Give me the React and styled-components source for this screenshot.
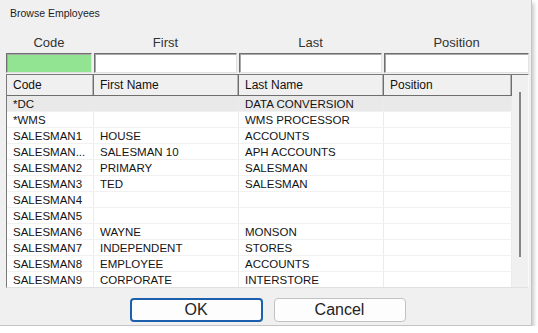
import React from "react";
import styled, { createGlobalStyle } from "styled-components";

const Global = createGlobalStyle`
  html, body { margin: 0; padding: 0; background: #ffffff; }
  body { font-family: "Liberation Sans", Arial, sans-serif; }
  * { box-sizing: border-box; }
`;

const Dialog = styled.div`
  width: 532px;
  height: 326px;
  background: #f0f0f0;
  border-right: 1px solid #c4c4c4;
  border-bottom: 1px solid #c4c4c4;
  box-shadow: 2px 3px 4px rgba(0, 0, 0, 0.22);
  display: flex;
  flex-direction: column;
  padding: 0 2px 0 6px;
`;

const Title = styled.div`
  font-size: 10.5px;
  line-height: 14px;
  height: 20px;
  padding: 6px 0 0 4px;
  color: #1e1e1e;
`;

const FilterGrid = styled.div`
  display: grid;
  grid-template-columns: 86px 143px 143px 145px;
  column-gap: 2px;
  margin-top: ${(p) => p.$top}px;
`;

const FilterLabel = styled.div`
  font-size: 13px;
  line-height: 17px;
  height: 17px;
  text-align: center;
  color: #333;
`;

const FilterInput = styled.div`
  height: 20px;
  background: ${(p) => (p.$active ? "#92e492" : "#ffffff")};
  border: 1px solid;
  border-color: #6f6f6f #e2e2e2 #e2e2e2 #6f6f6f;
  box-shadow: inset 1px 1px 0 #a8a8a8;
`;

const Table = styled.div`
  margin-top: 1px;
  height: 214px;
  display: flex;
  border-top: 1px solid #7a7a7a;
  border-left: 1px solid #7a7a7a;
  border-right: 1px solid #fafafa;
  border-bottom: 1px solid #e0e0e0;
  background: #fff;
  overflow: hidden;
`;

const Main = styled.div`
  width: 505px;
  display: flex;
  flex-direction: column;
`;

const cols = "87px 145px 145px 128px";

const HeaderRow = styled.div`
  display: grid;
  grid-template-columns: ${cols};
  height: 21px;
  flex: none;
  background: #f0f0f0;
  border-bottom: 1px solid #6e6e6e;
`;

const HeaderCell = styled.div`
  font-size: 12px;
  line-height: 20px;
  padding-left: 6px;
  color: #111;
  border-right: 1px solid #6e6e6e;
  box-shadow: inset -1px 0 0 #b5b5b5;
  white-space: nowrap;
  overflow: hidden;
`;

const Row = styled.div`
  display: grid;
  grid-template-columns: ${cols};
  height: 16px;
  flex: none;
  background: ${(p) => (p.$selected ? "#e9e9e9" : "#ffffff")};
  border-bottom: 1px solid #f1f1f1;
`;

const Cell = styled.div`
  font-size: 11.5px;
  line-height: 15px;
  padding: 1px 0 0 6px;
  color: #141414;
  border-right: 1px solid #ebebeb;
  white-space: nowrap;
  overflow: hidden;
`;

const Track = styled.div`
  width: 17px;
  background: #f0f0f0;
  padding: 17px 0 0 7px;
`;

const Thumb = styled.div`
  width: 2px;
  height: 165px;
  background: #858585;
`;

const ButtonRow = styled.div`
  margin-top: 10px;
  display: flex;
  justify-content: center;
  gap: 11px;
`;

const Button = styled.button`
  width: ${(p) => p.$w}px;
  height: 24px;
  background: #fdfdfd;
  border: ${(p) => (p.$primary ? "2px solid #1b5fad" : "1px solid #c2c2c2")};
  border-radius: 4px;
  font-family: "Liberation Sans", Arial, sans-serif;
  font-size: 16px;
  color: #222;
  padding: 0;
`;

const rows = [
  ["*DC", "", "DATA CONVERSION", ""],
  ["*WMS", "", "WMS PROCESSOR", ""],
  ["SALESMAN1", "HOUSE", "ACCOUNTS", ""],
  ["SALESMAN...", "SALESMAN 10", "APH ACCOUNTS", ""],
  ["SALESMAN2", "PRIMARY", "SALESMAN", ""],
  ["SALESMAN3", "TED", "SALESMAN", ""],
  ["SALESMAN4", "", "", ""],
  ["SALESMAN5", "", "", ""],
  ["SALESMAN6", "WAYNE", "MONSON", ""],
  ["SALESMAN7", "INDEPENDENT", "STORES", ""],
  ["SALESMAN8", "EMPLOYEE", "ACCOUNTS", ""],
  ["SALESMAN9", "CORPORATE", "INTERSTORE", ""],
];

export default function App() {
  return (
    <>
      <Global />
      <Dialog>
        <Title>Browse Employees</Title>
        <FilterGrid $top={14}>
          <FilterLabel>Code</FilterLabel>
          <FilterLabel>First</FilterLabel>
          <FilterLabel>Last</FilterLabel>
          <FilterLabel>Position</FilterLabel>
        </FilterGrid>
        <FilterGrid $top={2}>
          <FilterInput $active />
          <FilterInput />
          <FilterInput />
          <FilterInput />
        </FilterGrid>
        <Table>
          <Main>
            <HeaderRow>
              <HeaderCell>Code</HeaderCell>
              <HeaderCell>First Name</HeaderCell>
              <HeaderCell>Last Name</HeaderCell>
              <HeaderCell>Position</HeaderCell>
            </HeaderRow>
            {rows.map((r, i) => (
              <Row key={i} $selected={i === 0}>
                {r.map((c, j) => (
                  <Cell key={j}>{c}</Cell>
                ))}
              </Row>
            ))}
          </Main>
          <Track>
            <Thumb />
          </Track>
        </Table>
        <ButtonRow>
          <Button $primary $w={133}>OK</Button>
          <Button $w={132}>Cancel</Button>
        </ButtonRow>
      </Dialog>
    </>
  );
}
